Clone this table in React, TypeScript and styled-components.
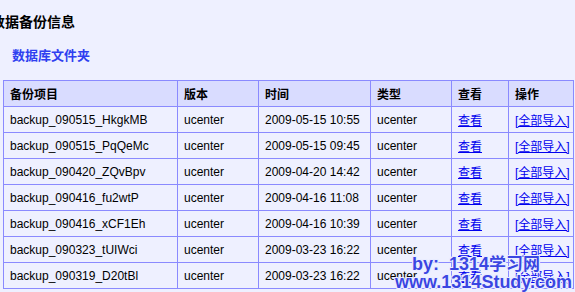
import React from "react";
import styled, { createGlobalStyle } from "styled-components";

const Global = createGlobalStyle`
  html, body { margin: 0; padding: 0; }
  body {
    background: #eef0ff;
    font-family: "Liberation Sans", Arial, "Noto Sans CJK SC", sans-serif;
    font-size: 12px;
    color: #000;
    overflow: hidden;
  }
`;

const Page = styled.div`
  position: relative;
  width: 575px;
  height: 292px;
  overflow: hidden;
`;

const Title = styled.h3`
  margin: 0 0 0 -9px;
  padding-top: 13px;
  font-family: "Noto Sans CJK SC", sans-serif;
  font-size: 14px;
  line-height: 16px;
  font-weight: 700;
  color: #000;
`;

const FolderLink = styled.a`
  display: block;
  margin: 19px 0 0 12px;
  font-family: "Noto Sans CJK SC", sans-serif;
  font-size: 13px;
  line-height: 14px;
  font-weight: 700;
  color: #2f3ff0;
  text-decoration: none;
`;

const Table = styled.table`
  margin: 18px 0 0 3px;
  width: 571px;
  table-layout: fixed;
  border-collapse: collapse;
  border: 1px solid #8a8aff;
`;

const HeadCell = styled.th`
  height: 25px;
  padding: 0 0 0 6px;
  border: 1px solid #8a8aff;
  background: #d9dcff;
  text-align: left;
  font-family: "Noto Sans CJK SC", sans-serif;
  font-size: 12px;
  font-weight: 700;
  color: #000;
`;

const Cell = styled.td`
  height: 25px;
  padding: 0 0 0 6px;
  border: 1px solid #8a8aff;
  font-size: 12px;
  white-space: nowrap;
  overflow: hidden;
`;

const CellLink = styled.a`
  color: #0000ee;
  text-decoration: underline;
  font-family: "Liberation Sans", "Noto Sans CJK SC", sans-serif;
  font-size: 12px;
`;

const Watermark = styled.div`
  position: absolute;
  right: 0;
  bottom: 1px;
  width: 180px;
  font-family: "Liberation Sans", "Noto Sans CJK SC", sans-serif;
  font-weight: 700;
  font-size: 18px;
  line-height: 18px;
  color: #3a46e2;
  text-shadow: 0 0 1px #fff, 1px 1px 0 #e8ecff, -1px -1px 0 #e8ecff, 1px -1px 0 #e8ecff, -1px 1px 0 #e8ecff;
  pointer-events: none;
`;

const WLine = styled.div<{ $indent?: number }>`
  padding-left: ${(p) => p.$indent ?? 0}px;
  white-space: nowrap;
`;

const CjkPart = styled.span`
  font-family: "Noto Sans CJK SC", sans-serif;
  font-size: 17px;
`;

const widths = [174, 81, 112, 81, 57, 65];
const heads = ["备份项目", "版本", "时间", "类型", "查看", "操作"];
const rows: [string, string][] = [
  ["backup_090515_HkgkMB", "2009-05-15 10:55"],
  ["backup_090515_PqQeMc", "2009-05-15 09:45"],
  ["backup_090420_ZQvBpv", "2009-04-20 14:42"],
  ["backup_090416_fu2wtP", "2009-04-16 11:08"],
  ["backup_090416_xCF1Eh", "2009-04-16 10:39"],
  ["backup_090323_tUIWci", "2009-03-23 16:22"],
  ["backup_090319_D20tBl", "2009-03-23 16:22"],
];

export default function App() {
  return (
    <Page>
      <Global />
      <Title>数据备份信息</Title>
      <FolderLink href="#">数据库文件夹</FolderLink>
      <Table>
        <colgroup>
          {widths.map((w, i) => (
            <col key={i} style={{ width: w }} />
          ))}
        </colgroup>
        <thead>
          <tr>
            {heads.map((h) => (
              <HeadCell key={h}>{h}</HeadCell>
            ))}
          </tr>
        </thead>
        <tbody>
          {rows.map(([name, time]) => (
            <tr key={name}>
              <Cell>{name}</Cell>
              <Cell>ucenter</Cell>
              <Cell>{time}</Cell>
              <Cell>ucenter</Cell>
              <Cell>
                <CellLink href="#">查看</CellLink>
              </Cell>
              <Cell>
                <CellLink href="#">[全部导入]</CellLink>
              </Cell>
            </tr>
          ))}
        </tbody>
      </Table>
      <Watermark>
        <WLine $indent={17}>
          by: &nbsp;1314<CjkPart>学习网</CjkPart>
        </WLine>
        <WLine>www.1314Study.com</WLine>
      </Watermark>
    </Page>
  );
}
